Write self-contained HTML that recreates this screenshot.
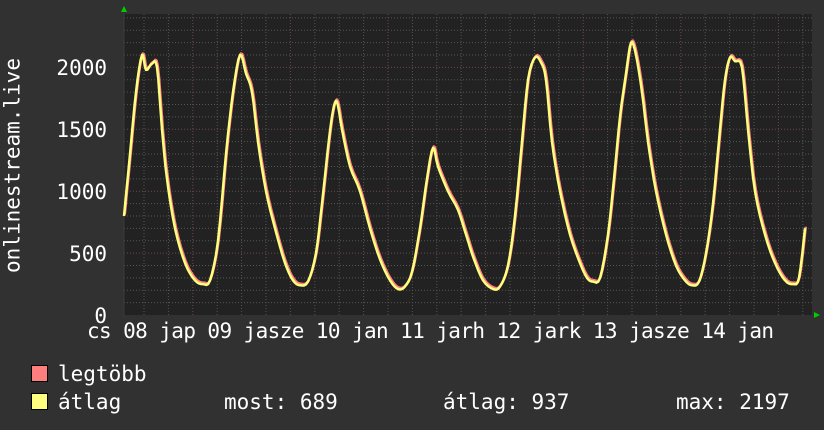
<!DOCTYPE html>
<html><head><meta charset="utf-8"><style>
html,body{margin:0;padding:0;background:#313131;}
body{width:824px;height:430px;position:relative;overflow:hidden;font-family:"DejaVu Sans Mono","Liberation Mono",monospace;color:#fff;}
.t{position:absolute;font-size:21px;white-space:pre;line-height:1;}
.sq{position:absolute;width:15px;height:15px;border:1px solid #000;}
</style></head><body>
<svg width="824" height="430" style="position:absolute;left:0;top:0">
<rect x="124" y="14" width="688" height="301" fill="#222"/>
<g id="grid"></g>
<polygon points="121,12 127,12 124,6" fill="#0c0"/>
<polygon points="814,312 814,318 820,315" fill="#0c0"/>
<line x1="124" y1="14" x2="124" y2="318" stroke="#3a3a3a" stroke-width="1"/>
<polyline id="r" fill="none" stroke="#ff7f7f" stroke-width="2.5" stroke-linejoin="round"/>
<polyline id="y" fill="none" stroke="#ffff7f" stroke-width="2.5" stroke-linejoin="round"/>
</svg>
<div class="t" style="left:-97px;top:155px;width:220px;text-align:center;transform:rotate(-90deg);transform-origin:center">onlinestream.live</div>
<div class="t" style="right:717px;top:58px">2000</div>
<div class="t" style="right:717px;top:120px">1500</div>
<div class="t" style="right:717px;top:182px">1000</div>
<div class="t" style="right:717px;top:244px">500</div>
<div class="t" style="right:717px;top:306px">0</div>
<div class="t" style="left:87px;top:321px;letter-spacing:-0.6px">cs 08 jap 09 jasze 10 jan 11 jarh 12 jark 13 jasze 14 jan</div>
<div class="sq" style="left:31px;top:365px;background:#ff7f7f"></div>
<div class="sq" style="left:31px;top:393px;background:#ffff7f"></div>
<div class="t" style="left:58px;top:364px">legtöbb</div>
<div class="t" style="left:58px;top:392px">átlag</div>
<div class="t" style="left:224px;top:392px">most: 689</div>
<div class="t" style="left:443px;top:392px">átlag: 937</div>
<div class="t" style="left:676px;top:392px">max: 2197</div>
<script>
var g=document.getElementById('grid'),s='';
for(var v=100;v<=2400;v+=100){var yy=315-v*0.1238;var maj=v%500==0;
s+='<line x1="124" x2="812" y1="'+yy+'" y2="'+yy+'" stroke="'+(maj?'#6a4a4a':'#555')+'" stroke-dasharray="1,2"/>';}
for(var x=144,i=0;x<812;x+=24.4,i++){var maj=(i%4==2);
s+='<line y1="14" y2="315" x1="'+x+'" x2="'+x+'" stroke="'+(maj?'#6a4a4a':'#555')+'" stroke-dasharray="1,2"/>';}
g.innerHTML=s;
var k=[124,800,130,1300,136,1800,142,2100,146,1980,152,2030,157,2000,162,1500,167,1100,175,700,185,420,195,280,203,250,210,280,218,600,226,1300,233,1800,240,2100,246,1950,252,1800,258,1400,266,1000,275,700,285,420,293,280,300,240,308,270,316,500,322,900,328,1350,333,1650,337,1720,342,1500,350,1200,360,1000,370,700,380,450,390,280,398,210,405,230,412,350,420,700,427,1100,433,1350,438,1200,448,1000,458,850,466,650,474,450,483,280,493,210,500,230,508,400,515,800,522,1400,528,1900,535,2080,541,2040,546,1900,552,1400,560,1000,570,650,580,420,587,300,593,270,600,300,608,650,614,1100,620,1600,626,1950,631,2200,636,2100,642,1800,648,1400,656,1000,666,650,676,400,685,280,692,240,699,270,706,500,713,900,720,1500,725,1900,730,2080,735,2050,742,2000,748,1500,755,1000,765,650,775,420,785,280,793,250,799,300,805,700];
var pts=[];for(var i=0;i<k.length;i+=2)pts.push([k[i],315-k[i+1]*0.1238]);
var sm=[];
for(var i=0;i<pts.length-1;i++){var p0=pts[Math.max(0,i-1)],p1=pts[i],p2=pts[i+1],p3=pts[Math.min(pts.length-1,i+2)];
for(var t=0;t<1;t+=0.25){var t2=t*t,t3=t2*t;
var x=0.5*((2*p1[0])+(-p0[0]+p2[0])*t+(2*p0[0]-5*p1[0]+4*p2[0]-p3[0])*t2+(-p0[0]+3*p1[0]-3*p2[0]+p3[0])*t3);
var y=0.5*((2*p1[1])+(-p0[1]+p2[1])*t+(2*p0[1]-5*p1[1]+4*p2[1]-p3[1])*t2+(-p0[1]+3*p1[1]-3*p2[1]+p3[1])*t3);
sm.push([x,y]);}}
sm.push(pts[pts.length-1]);
document.getElementById('y').setAttribute('points',sm.map(function(a){return a[0].toFixed(1)+','+a[1].toFixed(1)}).join(' '));
document.getElementById('r').setAttribute('points',sm.map(function(a){return (a[0]+0.8).toFixed(1)+','+(a[1]-1.5).toFixed(1)}).join(' '));
</script>
</body></html>
